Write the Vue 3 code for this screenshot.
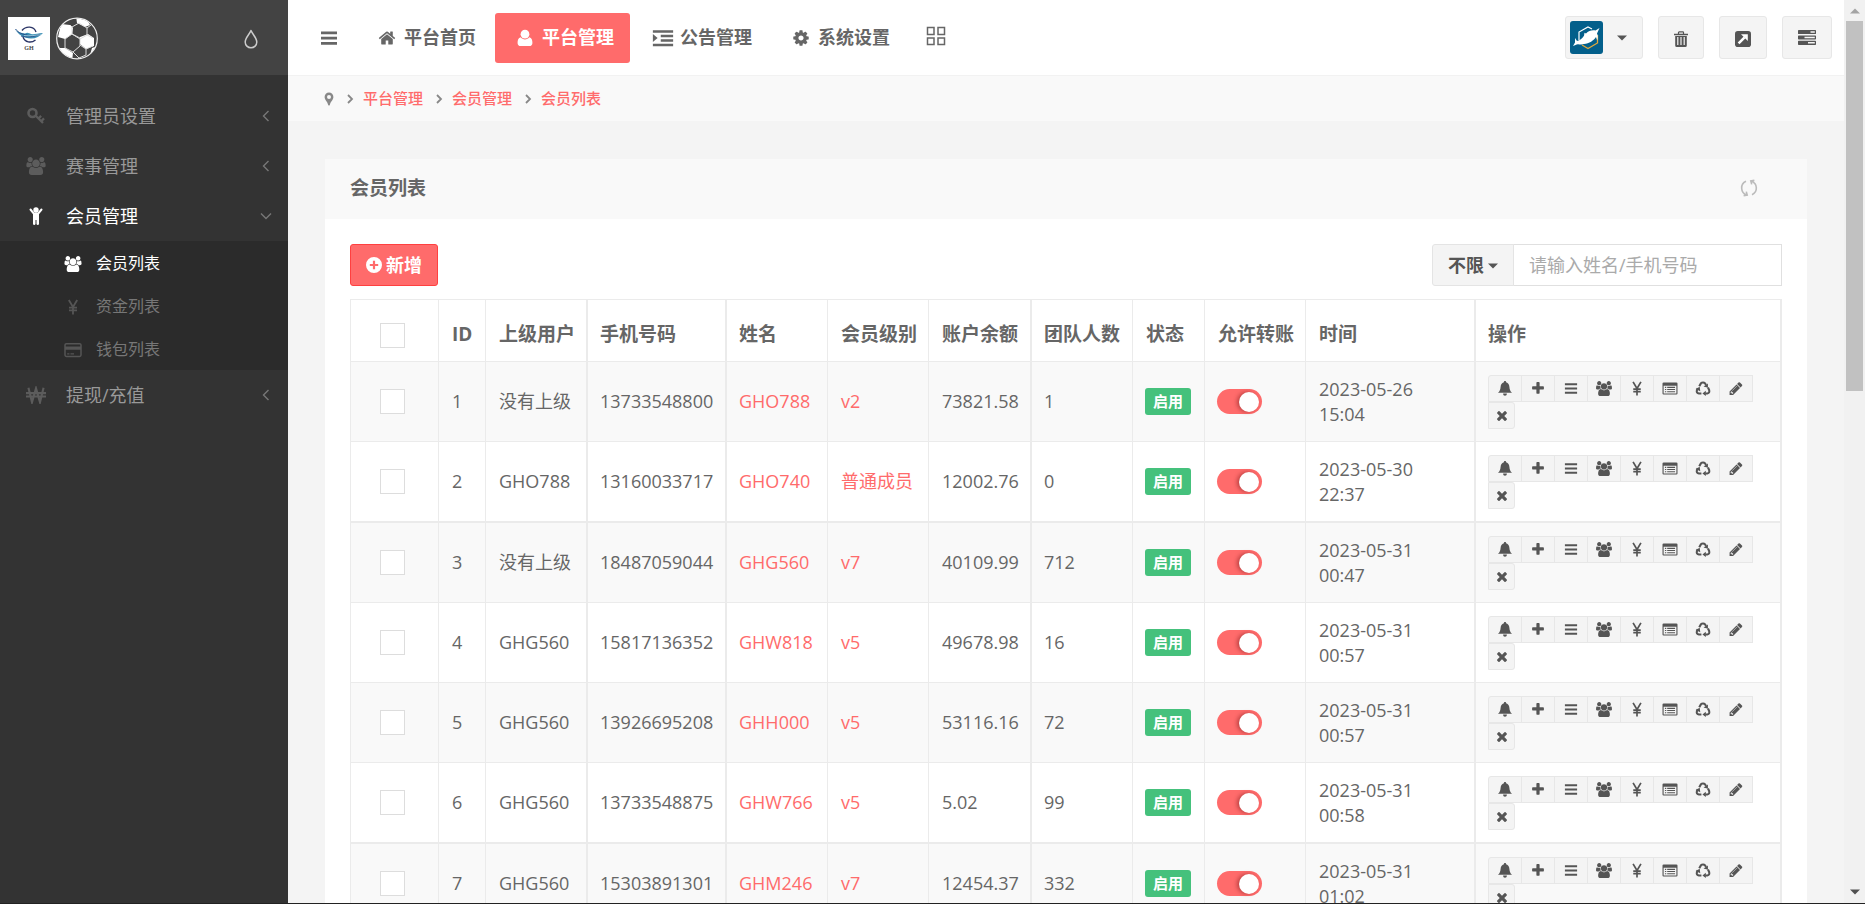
<script setup>
import { ref } from 'vue'

const navItems = [
  { icon: 'home', label: '平台首页' },
  { icon: 'user', label: '平台管理', active: true },
  { icon: 'indent', label: '公告管理' },
  { icon: 'cog', label: '系统设置' },
]

const menu = [
  { icon: 'key', label: '管理员设置' },
  { icon: 'group', label: '赛事管理' },
  {
    icon: 'child',
    label: '会员管理',
    open: true,
    children: [
      { icon: 'group', label: '会员列表', active: true },
      { icon: 'yen', label: '资金列表' },
      { icon: 'card', label: '钱包列表' },
    ],
  },
  { icon: 'won', label: '提现/充值' },
]

const crumbs = ['平台管理', '会员管理', '会员列表']
const columns = ['ID', '上级用户', '手机号码', '姓名', '会员级别', '账户余额', '团队人数', '状态', '允许转账', '时间', '操作']
const actions = [
  { icon: 'bell', label: '通知' },
  { icon: 'plus', label: '添加' },
  { icon: 'lines', label: '明细' },
  { icon: 'group', label: '团队' },
  { icon: 'yen', label: '资金' },
  { icon: 'listalt', label: '列表' },
  { icon: 'recycle', label: '回收' },
  { icon: 'pencil', label: '编辑' },
  { icon: 'times', label: '删除' },
]

const rows = ref([
  { id: 1, parent: '没有上级', phone: '13733548800', name: 'GHO788', level: 'v2', balance: '73821.58', team: 1, time: '2023-05-26 15:04', transfer: true },
  { id: 2, parent: 'GHO788', phone: '13160033717', name: 'GHO740', level: '普通成员', balance: '12002.76', team: 0, time: '2023-05-30 22:37', transfer: true },
  { id: 3, parent: '没有上级', phone: '18487059044', name: 'GHG560', level: 'v7', balance: '40109.99', team: 712, time: '2023-05-31 00:47', transfer: true },
  { id: 4, parent: 'GHG560', phone: '15817136352', name: 'GHW818', level: 'v5', balance: '49678.98', team: 16, time: '2023-05-31 00:57', transfer: true },
  { id: 5, parent: 'GHG560', phone: '13926695208', name: 'GHH000', level: 'v5', balance: '53116.16', team: 72, time: '2023-05-31 00:57', transfer: true },
  { id: 6, parent: 'GHG560', phone: '13733548875', name: 'GHW766', level: 'v5', balance: '5.02', team: 99, time: '2023-05-31 00:58', transfer: true },
  { id: 7, parent: 'GHG560', phone: '15303891301', name: 'GHM246', level: 'v7', balance: '12454.37', team: 332, time: '2023-05-31 01:02', transfer: true },
])
</script>

<template>
  <div class="app">
    <svg class="sprite" aria-hidden="true">
      <symbol id="home" viewBox="0 0 1792 1792"><path fill="currentColor" d="M1472 992v480q0 26-19 45t-45 19h-384v-384h-256v384h-384q-26 0-45-19t-19-45v-480q0-1 .5-3t.5-3l575-474 575 474q1 2 1 6zm223-69l-62 74q-8 9-21 11h-3q-13 0-21-7l-692-577-692 577q-12 8-24 7-13-2-21-11l-62-74q-8-10-7-23.5t11-21.5l719-599q32-26 76-26t76 26l244 204v-195q0-14 9-23t23-9h192q14 0 23 9t9 23v408l219 182q10 8 11 21.5t-7 23.5z" /></symbol>
      <symbol id="user" viewBox="0 0 16 16"><circle cx="8" cy="4.600" r="3.900" fill="currentColor" /><path fill="currentColor" d="M4.200 7.400C2 8 1.400 10 1.400 12.400c0 1.800 1.100 2.800 2.800 2.800h7.600c1.700 0 2.800-1 2.800-2.800 0-2.400-.6-4.400-2.800-5-1 1.200-2.300 1.900-3.800 1.900s-2.800-.7-3.800-1.900z" /></symbol>
      <symbol id="indent" viewBox="0 0 18 16"><path fill="currentColor" d="M0 1h18v2.300H0zM7 5h11v2.300H7zM7 9h11v2.300H7zM0 13h18v2.300H0zM0 4.400 4.200 8 0 11.600z" /></symbol>
      <symbol id="cog" viewBox="0 0 1792 1792"><path fill="currentColor" d="M1152 896q0-106-75-181t-181-75-181 75-75 181 75 181 181 75 181-75 75-181zm512-109v222q0 12-8 23t-20 13l-185 28q-19 54-39 91 35 50 107 138 10 12 10 25t-9 23q-27 37-99 108t-94 71q-12 0-26-9l-138-108q-44 23-91 38-16 136-29 186-7 28-36 28h-222q-14 0-24.500-8.500t-11.500-21.500l-28-184q-49-16-90-37l-141 107q-10 9-25 9-14 0-25-11-126-114-165-168-7-10-7-23 0-12 8-23 15-21 51-66.500t54-70.500q-27-50-41-99l-183-27q-13-2-21-12.500t-8-23.500v-222q0-12 8-23t19-13l186-28q14-46 39-92-40-57-107-138-10-12-10-24 0-10 9-23 26-36 98.500-107.500t94.500-71.500q13 0 26 10l138 107q44-23 91-38 16-136 29-186 7-28 36-28h222q14 0 24.500 8.500t11.500 21.500l28 184q49 16 90 37l142-107q9-9 24-9 13 0 25 10 129 119 165 170 7 8 7 22 0 12-8 23-15 21-51 66.500t-54 70.500q26 50 41 98l183 28q13 2 21 12.500t8 23.500z" /></symbol>
      <symbol id="group" viewBox="-64 0 1920 1792"><path fill="currentColor" d="M529 896q-162 5-265 128h-134q-82 0-138-40.500t-56-118.500q0-353 124-353 6 0 43.500 21t97.500 42.500 119 21.500q67 0 133-23-5 37-5 66 0 139 81 256zm1071 637q0 120-73 189.500t-194 69.500h-874q-121 0-194-69.500t-73-189.500q0-53 3.500-103.500t14-109 26.500-108.500 43-97.500 62-81 85.500-53.500 111.500-20q10 0 43 21.500t73 48 107 48 135 21.500 135-21.500 107-48 73-48 43-21.500q61 0 111.500 20t85.500 53.500 62 81 43 97.500 26.500 108.500 14 109 3.500 103.500zm-1024-1277q0 106-75 181t-181 75-181-75-75-181 75-181 181-75 181 75 75 181zm704 384q0 159-112.500 271.500t-271.500 112.500-271.500-112.500-112.500-271.500 112.500-271.500 271.500-112.500 271.500 112.500 112.500 271.500zm576 225q0 78-56 118.500t-138 40.500h-134q-103-123-265-128 81-117 81-256 0-29-5-66 66 23 133 23 59 0 119-21.500t97.500-42.500 43.500-21q124 0 124 353zm-128-609q0 106-75 181t-181 75-181-75-75-181 75-181 181-75 181 75 75 181z" /></symbol>
      <symbol id="key" viewBox="0 0 18 18"><circle cx="5.500" cy="6" r="4" fill="none" stroke="currentColor" stroke-width="2.600" /><path d="M8.500 8.500 16 16M11.500 11.500l2.600-2.600M14.200 14.200l2.800-2.800" fill="none" stroke="currentColor" stroke-width="2.300" /></symbol>
      <symbol id="child" viewBox="0 0 14 18"><circle cx="7" cy="3" r="2.700" fill="currentColor" /><path d="M1.500 2.500 4.800 6.600h4.400l3.300-4.100" fill="none" stroke="currentColor" stroke-width="2" stroke-linecap="round" stroke-linejoin="round" /><path fill="currentColor" d="M4 6h6v11q-.2 1-1.200 1T7.500 17v-4h-1v4q-.3 1-1.300 1T4 17z" /></symbol>
      <symbol id="yen" viewBox="0 0 16 16"><path d="M3.800 1 8 8l4.200-7M8 8v7.500M4 8.600h8M4 11.400h8" fill="none" stroke="currentColor" stroke-width="1.800" /></symbol>
      <symbol id="won" viewBox="0 0 18 16"><path d="M2.200 1.500 5.400 14.500 9 2l3.600 12.500 3.200-13M0 6.300h18M0 9.400h18" fill="none" stroke="currentColor" stroke-width="1.900" /></symbol>
      <symbol id="card" viewBox="0 0 18 16"><rect x="1" y="1.700" width="16" height="12.800" rx="1.400" fill="none" stroke="currentColor" stroke-width="1.500" /><path fill="currentColor" d="M1 4.500h16v3.200H1zM3.200 11.200h2.200v1.300H3.200zM6.500 11.200h3.500v1.300H6.500z" /></symbol>
      <symbol id="bars" viewBox="0 0 16 16"><path fill="currentColor" d="M0 1.500h16v2.700H0zM0 6.800h16v2.700H0zM0 12h16v2.700H0z" /></symbol>
      <symbol id="lines" viewBox="0 0 16 16"><path fill="currentColor" d="M1.500 2.500h13v2h-13zM1.500 7h13v2h-13zM1.500 11.500h13v2h-13z" /></symbol>
      <symbol id="bell" viewBox="0 0 16 16"><path fill="currentColor" d="M8 0c.8 0 1.200.5 1.200 1.300 2.300.6 3.300 2.500 3.500 5 .2 3 .9 4.400 2.800 6.300H.5c1.900-1.900 2.600-3.300 2.800-6.300.2-2.500 1.200-4.400 3.500-5C6.800.5 7.200 0 8 0zM6 13.300h4c0 1.500-.8 2.400-2 2.400s-2-.9-2-2.400z" /></symbol>
      <symbol id="plus" viewBox="0 0 1792 1792"><path fill="currentColor" d="M1600 736v192q0 40-28 68t-68 28h-416v416q0 40-28 68t-68 28h-192q-40 0-68-28t-28-68v-416h-416q-40 0-68-28t-28-68v-192q0-40 28-68t68-28h416v-416q0-40 28-68t68-28h192q40 0 68 28t28 68v416h416q40 0 68 28t28 68z" /></symbol>
      <symbol id="listalt" viewBox="0 0 16 16"><path fill="currentColor" fill-rule="evenodd" d="M1.200 1.500h13.600Q16 1.500 16 2.700v10.600q0 1.200-1.200 1.200H1.200Q0 14.500 0 13.300V2.700q0-1.200 1.200-1.200zM1.200 5v8.300h13.600V5zM2.600 6.200H4v1.200H2.600zM5 6.200h8.400v1.200H5zM2.600 8.500H4v1.200H2.600zM5 8.500h8.400v1.200H5zM2.600 10.800H4V12H2.600zM5 10.800h8.400V12H5z" /></symbol>
      <symbol id="recycle" viewBox="0 0 16 16"><path d="M4 5.700 5.900 2.300Q6.600 1.500 8 1.500t2.200 1l1 1.800M13.300 7l1.200 2.500q1 3.400-1.900 3.900H10.500M6.300 13.400H3.700Q.7 13 1.500 9.800l1-2" fill="none" stroke="currentColor" stroke-width="2.200" /><path fill="currentColor" d="M8.600 5.800 13.200 2.600l.1 4.600zM11 10.300v5.700L7.400 13.300zM.2 8.500 4.500 6.200l.6 4.700z" /></symbol>
      <symbol id="pencil" viewBox="0 0 1792 1792"><path fill="currentColor" d="M491 1536l91-91-235-235-91 91v107h128v128h107zm523-928q0-22-22-22-10 0-17 7l-542 542q-7 7-7 17 0 22 22 22 10 0 17-7l542-542q7-7 7-17zm-54-192l416 416-832 832h-416v-416zm683 96q0 53-37 90l-166 166-416-416 166-165q36-38 90-38 53 0 91 38l235 234q37 39 37 91z" /></symbol>
      <symbol id="times" viewBox="0 0 1792 1792"><path fill="currentColor" d="M1490 1322q0 40-28 68l-136 136q-28 28-68 28t-68-28l-294-294-294 294q-28 28-68 28t-68-28l-136-136q-28-28-28-68t28-68l294-294-294-294q-28-28-28-68t28-68l136-136q28-28 68-28t68 28l294 294 294-294q28-28 68-28t68 28l136 136q28 28 28 68t-28 68l-294 294 294 294q28 28 28 68z" /></symbol>
      <symbol id="drop" viewBox="0 0 14 20"><path d="M7 1.500C5.400 5.500 1.200 9 1.200 13a5.800 5.800 0 0 0 11.600 0C12.800 9 8.600 5.500 7 1.500z" fill="none" stroke="currentColor" stroke-width="1.500" stroke-linejoin="round" /></symbol>
      <symbol id="left" viewBox="0 0 12 12"><path d="M8.500 1 3.500 6l5 5" fill="none" stroke="currentColor" stroke-width="1.400" /></symbol>
      <symbol id="down" viewBox="0 0 12 12"><path d="M1 3.500 6 8.500l5-5" fill="none" stroke="currentColor" stroke-width="1.400" /></symbol>
      <symbol id="right" viewBox="0 0 12 12"><path d="M4 2 8 6l-4 4" fill="none" stroke="currentColor" stroke-width="1.800" /></symbol>
      <symbol id="pin" viewBox="0 0 10 14"><path fill="currentColor" fill-rule="evenodd" d="M5 .5a4.400 4.400 0 0 1 4.400 4.400C9.400 8 6.300 9.500 5.800 13q-.8 1-1.600 0C3.700 9.500.6 8 .6 4.900A4.400 4.400 0 0 1 5 .5zM5 3a2 2 0 1 0 0 4 2 2 0 0 0 0-4z" /></symbol>
      <symbol id="tiles" viewBox="0 0 20 20"><path d="M1.500 1.500h6.500v7H1.500zM12 1.500h6.500v7H12zM1.500 12h6.500v6.500H1.500zM12 12h6.500v6.500H12z" fill="none" stroke="currentColor" stroke-width="1.500" /></symbol>
      <symbol id="trash" viewBox="0 0 14 16"><path d="M4.500 3V1.600q0-.7.7-.7h3.600q.7 0 .7.700V3" fill="none" stroke="currentColor" stroke-width="1.200" /><path fill="currentColor" fill-rule="evenodd" d="M0 2.700h14v1.600H0zM1.200 5h11.600v9.500q0 1.500-1.500 1.500H2.700q-1.500 0-1.500-1.500zM3.200 6v8h1.200V6zM6.400 6v8h1.200V6zM9.600 6v8h1.200V6z" /></symbol>
      <symbol id="external" viewBox="0 0 16 16"><rect width="16" height="16" rx="2.800" fill="currentColor" /><path d="m3.600 12.400 6-6" stroke="#fff" stroke-width="2.600" /><path d="M6 3.300h6.800v6.800z" fill="#fff" /></symbol>
      <symbol id="tasks" viewBox="0 0 18 15"><path fill="currentColor" fill-rule="evenodd" d="M.7 0h16.600q.7 0 .7.700v2.700q0 .7-.7.700H.7q-.7 0-.7-.7V.700Q0 0 .7 0zM12.500 1.300v1.500h4.300V1.300zM.7 5.400h16.600q.7 0 .7.700v2.700q0 .7-.7.700H.7q-.7 0-.7-.7V6.100q0-.7.7-.7zM6.500 6.700v1.500h10.300V6.700zM.7 10.800h16.600q.7 0 .7.700v2.700q0 .7-.7.700H.7q-.7 0-.7-.7v-2.700q0-.7.7-.7zM10 12.100v1.500h6.800v-1.500z" /></symbol>
      <symbol id="refresh" viewBox="0 0 18 18"><path d="M6 2.300A7.200 7.200 0 0 0 6.500 15.700M3.600 16.600l3.600-.6-.9-3.400M12 15.700A7.200 7.200 0 0 0 11.500 2.300M14.400 1.400l-3.600.6.900 3.400" fill="none" stroke="currentColor" stroke-width="1.600" /></symbol>
      <symbol id="pluscircle" viewBox="0 0 16 16"><path fill="currentColor" fill-rule="evenodd" d="M8 0a8 8 0 1 1 0 16A8 8 0 0 1 8 0zM6.900 3.800v3.100H3.800v2.200h3.100v3.100h2.200V9.100h3.100V6.900H9.100V3.800z" /></symbol>
      <symbol id="caret" viewBox="0 0 10 6"><path fill="currentColor" d="M0 .5h10L5 5.500z" /></symbol>
    </svg>

    <aside class="sidebar">
      <div class="brand">
        <svg class="logo" viewBox="0 0 42 43" role="img" aria-label="GH">
          <rect width="42" height="43" fill="#fff" />
          <path d="M14 13.500c4-5 12-4.500 14 1.500M15 20c2 5.500 8 6.500 12.500 3" fill="none" stroke="#2b3566" stroke-width="1.400" />
          <path d="M7 12c2 3 6 4 10 4.500 3-1.500 4 0 6 .5 3 .8 6-.5 12-1-3 3.500-7 5.500-12 5.500-7 0-13-4-16-9.500z" fill="#3c8fb5" />
          <path d="M7.500 12c3 4 7 5.500 12 6M13 19c6 1.500 12 1 19-1.500" fill="none" stroke="#27508a" stroke-width="1" />
          <path d="M16 18.500c6 1 11-.5 17-.7" fill="none" stroke="#bfe0ea" stroke-width=".7" />
          <text x="21" y="33" text-anchor="middle" class="logo-text">GH</text>
        </svg>
        <svg class="logo" viewBox="0 0 42 43" aria-hidden="true">
          <clipPath id="ballclip"><circle cx="21" cy="21.500" r="20" /></clipPath>
          <g clip-path="url(#ballclip)">
            <path d="M5 7 14 8l3 3-1 6-7 5-7-2zM24 20l8-3 6 4 0 8-8 3-6-5zM0 31l9 0 8 5-1 8H0zM20-1l10 2 4 7-5 2-8-4zM36 31l8-3-6 13-5 0z" fill="#fff" />
            <path d="M16 10l7-4 8 5v7l-7 4-8-5zM9 22l7-5 8 4v8l-7 6-8-4zM24 28l6 4 0 6-7 3-6-6M31 11l4-3M31 18l6 3M37 29l-7 3M16 10l-2-2" fill="none" stroke="#ddd" stroke-width="1" />
          </g>
          <circle cx="21" cy="21.500" r="20.300" fill="none" stroke="#eee" stroke-width="1.200" />
        </svg>
        <button class="drop" type="button" aria-label="主题"><svg><use href="#drop" /></svg></button>
      </div>
      <nav class="menu">
        <template v-for="item in menu" :key="item.label">
          <a href="#" class="menu-item" :class="{ open: item.open }">
            <svg class="menu-icon"><use :href="'#' + item.icon" /></svg>
            <span>{{ item.label }}</span>
            <svg class="arrow"><use :href="item.open ? '#down' : '#left'" /></svg>
          </a>
          <div v-if="item.children" class="submenu">
            <a v-for="sub in item.children" :key="sub.label" href="#" class="sub-item" :class="{ active: sub.active }">
              <svg class="menu-icon"><use :href="'#' + sub.icon" /></svg>
              <span>{{ sub.label }}</span>
            </a>
          </div>
        </template>
      </nav>
    </aside>

    <div class="main">
      <header class="topbar">
        <button class="plain" type="button" aria-label="菜单"><svg class="i16"><use href="#bars" /></svg></button>
        <nav class="topnav">
          <a v-for="item in navItems" :key="item.label" href="#" class="nav-item" :class="{ active: item.active }">
            <svg><use :href="'#' + item.icon" /></svg>
            <span>{{ item.label }}</span>
          </a>
        </nav>
        <button class="plain tiles" type="button" aria-label="应用"><svg><use href="#tiles" /></svg></button>
        <div class="tools">
          <button class="tool profile" type="button" aria-label="账户">
            <svg class="avatar" viewBox="0 0 33 33">
              <rect width="33" height="33" rx="3" fill="#035f8b" />
              <path d="M9 19v-8l9-5 4 2" fill="none" stroke="#fff" stroke-width="1.200" />
              <path d="M27.500 14v8l-9.500 5.500-6-3.500" fill="none" stroke="#e2a93c" stroke-width="1.300" />
              <path d="M29.500 7l-4 2.500c-3-.8-7 .2-9.500 3l-1.500-.7-.5 3c-2 2.800-4 4.500-7 5.200l-2-3 0 4.500-2 3.500c2-1 3-1.500 5-1.800 2 .2 4 .6 6-.2 5-.5 10-3.500 12-7l1.200 3.500c.8-3 .8-5-.2-7z" fill="#fff" />
            </svg>
            <svg class="caret"><use href="#caret" /></svg>
          </button>
          <button class="tool trash" type="button" aria-label="清空"><svg><use href="#trash" /></svg></button>
          <button class="tool external" type="button" aria-label="打开"><svg><use href="#external" /></svg></button>
          <button class="tool tasks" type="button" aria-label="任务"><svg><use href="#tasks" /></svg></button>
        </div>
      </header>

      <nav class="crumbs" aria-label="位置">
        <svg class="pin"><use href="#pin" /></svg>
        <template v-for="c in crumbs" :key="c">
          <svg class="sep"><use href="#right" /></svg>
          <a href="#">{{ c }}</a>
        </template>
      </nav>

      <main class="content">
        <section class="panel">
          <div class="panel-head">
            <h1>会员列表</h1>
            <button class="plain" type="button" aria-label="刷新"><svg class="i18"><use href="#refresh" /></svg></button>
          </div>
          <div class="panel-body">
            <div class="toolbar">
              <button class="add" type="button"><svg class="i16"><use href="#pluscircle" /></svg>新增</button>
              <div class="search">
                <label class="pick">
                  <select aria-label="状态筛选"><option>不限</option></select>
                  <svg class="caret"><use href="#caret" /></svg>
                </label>
                <input type="text" aria-label="搜索会员" placeholder="请输入姓名/手机号码" />
              </div>
            </div>
            <table>
              <colgroup>
                <col class="w88" /><col class="w47" /><col class="w101" /><col class="w139" /><col class="w102" /><col class="w101" />
                <col class="w102" /><col class="w102" /><col class="w72" /><col class="w101" /><col class="w169" /><col />
              </colgroup>
              <thead>
                <tr>
                  <th class="check"><input type="checkbox" aria-label="全选" /></th>
                  <th v-for="c in columns" :key="c">{{ c }}</th>
                </tr>
              </thead>
              <tbody>
                <tr v-for="r in rows" :key="r.id">
                  <td class="check"><input type="checkbox" :aria-label="'选择 ' + r.id" /></td>
                  <td>{{ r.id }}</td>
                  <td>{{ r.parent }}</td>
                  <td>{{ r.phone }}</td>
                  <td><a href="#">{{ r.name }}</a></td>
                  <td><a href="#">{{ r.level }}</a></td>
                  <td>{{ r.balance }}</td>
                  <td>{{ r.team }}</td>
                  <td class="control"><span class="badge">启用</span></td>
                  <td class="control"><input v-model="r.transfer" class="switch" type="checkbox" role="switch" :aria-label="'允许转账 ' + r.id" /></td>
                  <td class="time">{{ r.time }}</td>
                  <td class="ops">
                    <div class="group">
                      <button v-for="a in actions" :key="a.icon" type="button" :aria-label="a.label"><svg><use :href="'#' + a.icon" /></svg></button>
                    </div>
                  </td>
                </tr>
              </tbody>
            </table>
          </div>
        </section>
      </main>
    </div>

    <div class="scrollbar" aria-hidden="true">
      <svg class="caret up"><use href="#caret" /></svg>
      <div class="thumb"></div>
      <svg class="caret end"><use href="#caret" /></svg>
    </div>
  </div>
</template>

<style>
body {
  margin: 0;
  overflow: hidden;
}
</style>

<style scoped>
.app {
  display: flex;
  box-sizing: border-box;
  height: 100vh;
  overflow: hidden;
  border-bottom: 1px solid #222;
  background: #f4f4f4;
  color: #666;
  font: 18px/25px "Open Sans", "Noto Sans CJK SC", sans-serif;
}
.app *,
.app *::before {
  box-sizing: border-box;
}
.sprite {
  position: absolute;
  width: 0;
  height: 0;
}
svg {
  display: block;
  flex: none;
}
a {
  color: #ff6b6b;
  text-decoration: none;
}
button,
input,
select {
  margin: 0;
  font: inherit;
  color: inherit;
}
.i16 {
  width: 16px;
  height: 16px;
}
.i18 {
  width: 18px;
  height: 18px;
}
.plain {
  padding: 0;
  border: 0;
  background: none;
}

.sidebar {
  flex: none;
  width: 288px;
  background: #333;
}
.brand {
  display: flex;
  align-items: center;
  gap: 6px;
  height: 75px;
  padding: 2px 30px 0 8px;
  background: #434343;
}
.logo {
  width: 42px;
  height: 43px;
}
.logo-text {
  font: bold 6px "Liberation Serif", serif;
  fill: #444;
}
.drop {
  margin-left: auto;
  padding: 0;
  border: 0;
  background: none;
  color: #ccc;
}
.drop svg {
  width: 14px;
  height: 20px;
}
.menu {
  padding-top: 16px;
}
.menu-item {
  display: flex;
  align-items: center;
  height: 50px;
  padding: 0 16px 0 26px;
  color: #999;
}
.menu-item .menu-icon {
  width: 20px;
  height: 18px;
  margin-right: 20px;
  color: #5c5c5c;
}
.menu-item.open,
.menu-item.open .menu-icon {
  color: #fff;
}
.arrow {
  width: 12px;
  height: 12px;
  margin-left: auto;
  color: #777;
}
.submenu {
  background: #2b2b2b;
}
.sub-item {
  display: flex;
  align-items: center;
  height: 43px;
  padding: 2px 0 0 64px;
  color: #777;
  font-size: 16px;
}
.sub-item .menu-icon {
  width: 18px;
  height: 16px;
  margin-right: 14px;
  color: #555;
}
.sub-item.active,
.sub-item.active .menu-icon {
  color: #fff;
}

.main {
  flex: 1;
  min-width: 0;
}
.topbar {
  display: flex;
  align-items: center;
  height: 75px;
  padding: 0 12px 0 33px;
  background: #fff;
}
.topnav {
  display: flex;
  gap: 3px;
  margin-left: 20px;
}
.nav-item {
  display: flex;
  align-items: center;
  gap: 5px;
  height: 50px;
  padding: 0 16px 0 18px;
  border-radius: 3px;
  color: #666;
  font-weight: bold;
}
.nav-item svg {
  width: 24px;
  height: 18px;
}
.nav-item.active {
  background: #ff6b6b;
  color: #fff;
}
.tiles {
  margin-left: 20px;
  padding-bottom: 3px;
}
.tiles svg {
  width: 20px;
  height: 20px;
}
.tools {
  display: flex;
  gap: 15px;
  margin-left: auto;
}
.tool {
  display: flex;
  align-items: center;
  justify-content: center;
  height: 43px;
  padding: 3px 0 0;
  border: 1px solid #e7e7e7;
  border-radius: 3px;
  background: #f4f4f4;
  color: #555;
}
.profile {
  justify-content: flex-start;
  width: 78px;
  gap: 14px;
  padding: 0 0 0 4px;
}
.avatar {
  width: 33px;
  height: 33px;
}
.caret {
  width: 10px;
  height: 6px;
}
.trash {
  width: 46px;
}
.trash svg {
  width: 14px;
  height: 16px;
}
.external {
  width: 48px;
}
.external svg {
  width: 16px;
  height: 16px;
}
.tasks {
  width: 50px;
  padding: 0;
}
.tasks svg {
  width: 18px;
  height: 15px;
}
.crumbs {
  display: flex;
  align-items: center;
  height: 46px;
  padding-left: 36px;
  border-top: 1px solid #f2f2f2;
  background: #f9f9f9;
  color: #888;
  font-size: 15px;
  font-weight: 500;
}
.pin {
  width: 10px;
  height: 14px;
}
.sep {
  width: 12px;
  height: 12px;
  margin: 0 7px 0 10px;
}

.content {
  padding: 38px 37px 0;
}
.panel {
  background: #fff;
}
.panel-head {
  display: flex;
  align-items: center;
  justify-content: space-between;
  height: 60px;
  padding: 0 49px 2px 25px;
  background: #f9f9f9;
  color: #bbb;
}
h1 {
  margin: 0;
  color: #666;
  font-size: 19px;
  font-weight: bold;
}
.panel-body {
  padding: 25px;
}
.toolbar {
  display: flex;
  justify-content: space-between;
  margin-bottom: 13px;
}
.add {
  display: flex;
  align-items: center;
  gap: 4px;
  height: 42px;
  padding: 0 15px;
  border: 1px solid #ff4040;
  border-radius: 3px;
  background: #ff6b6b;
  color: #fff;
  font-weight: bold;
}
.search {
  display: flex;
  width: 350px;
  height: 42px;
}
.pick {
  position: relative;
  flex: none;
  width: 82px;
}
.pick select {
  width: 100%;
  height: 100%;
  padding: 0 15px;
  border: 1px solid #e4e4e4;
  border-radius: 3px 0 0 3px;
  appearance: none;
  background: #f4f4f4;
  color: #555;
  font-weight: bold;
}
.pick .caret {
  position: absolute;
  top: 19px;
  right: 16px;
  color: #555;
  pointer-events: none;
}
.search input {
  flex: 1;
  min-width: 0;
  margin-left: -1px;
  padding: 0 15px;
  border: 1px solid #e0e0e0;
  border-radius: 0;
}
.search input::placeholder {
  color: #aaa;
}

table {
  width: 100%;
  table-layout: fixed;
  border: solid #ebebeb;
  border-width: 1px 2px 0 0;
  border-collapse: separate;
  border-spacing: 0;
}
.w47 {
  width: 47px;
}
.w72 {
  width: 72px;
}
.w88 {
  width: 88px;
}
.w101 {
  width: 101px;
}
.w102 {
  width: 102px;
}
.w139 {
  width: 139px;
}
.w169 {
  width: 169px;
}
th,
td {
  padding: 0 0 0 13px;
  border: solid #ebebeb;
  border-width: 0 0 1px 1px;
  text-align: left;
  white-space: nowrap;
}
th {
  height: 62px;
  padding-top: 7px;
  font-size: 19px;
  font-weight: bold;
}
td {
  height: 80px;
}
th:nth-child(4),
td:nth-child(4),
th:nth-child(5),
td:nth-child(5),
th:nth-child(8),
td:nth-child(8),
th:nth-child(12),
td:nth-child(12) {
  padding-left: 12px;
  border-left-width: 2px;
}
tbody tr:nth-child(odd) {
  background: #f9f9f9;
}
tbody tr:nth-child(4n + 2) td {
  height: 81px;
  border-bottom-width: 2px;
}
th.check,
td.check {
  padding-left: 29px;
}
td.control {
  padding-left: 12px;
}
.check input {
  display: block;
  width: 25px;
  height: 25px;
  border: 1px solid #ddd;
  appearance: none;
  background: #fff;
}
th.check {
  padding-top: 10px;
}
.badge {
  display: block;
  width: 46px;
  height: 27px;
  border-radius: 3px;
  background: #45c17c;
  color: #fff;
  font-size: 15px;
  font-weight: bold;
  line-height: 27px;
  text-align: center;
}
.switch {
  display: block;
  width: 45px;
  height: 25px;
  border-radius: 13px;
  appearance: none;
  background: #ccc;
}
.switch::before {
  display: block;
  width: 20px;
  height: 20px;
  margin: 3px;
  border-radius: 50%;
  background: #fff;
  content: "";
}
.switch:checked {
  padding-left: 19px;
  background: #ff6b6b;
}
.switch:checked::before {
  box-shadow: -2px 0 4px rgba(80, 0, 0, 0.4);
}
td.time {
  padding-right: 50px;
  white-space: normal;
}
.ops {
  white-space: normal;
}
.group {
  display: flex;
  flex-wrap: wrap;
  padding: 0 12px 0 1px;
}
.group button {
  display: flex;
  align-items: center;
  justify-content: center;
  width: 34px;
  height: 27px;
  margin-left: -1px;
  padding: 0;
  border: 1px solid #e7e7e7;
  background: #f4f4f4;
  color: #555;
}
.group button:first-child {
  border-top-left-radius: 3px;
}
.group button:last-child {
  width: 27px;
  border-radius: 0 3px 3px 0;
}
.group svg {
  width: 16px;
  height: 15px;
}

.scrollbar {
  display: flex;
  flex: none;
  flex-direction: column;
  align-items: center;
  width: 21px;
  background: #f1f1f1;
  color: #505050;
}
.up {
  margin: 8px 0 7px;
  color: #a3a3a3;
  transform: rotate(180deg);
}
.thumb {
  width: 17px;
  height: 41%;
  background: #c1c1c1;
}
.end {
  margin: auto 0 8px;
}
</style>
